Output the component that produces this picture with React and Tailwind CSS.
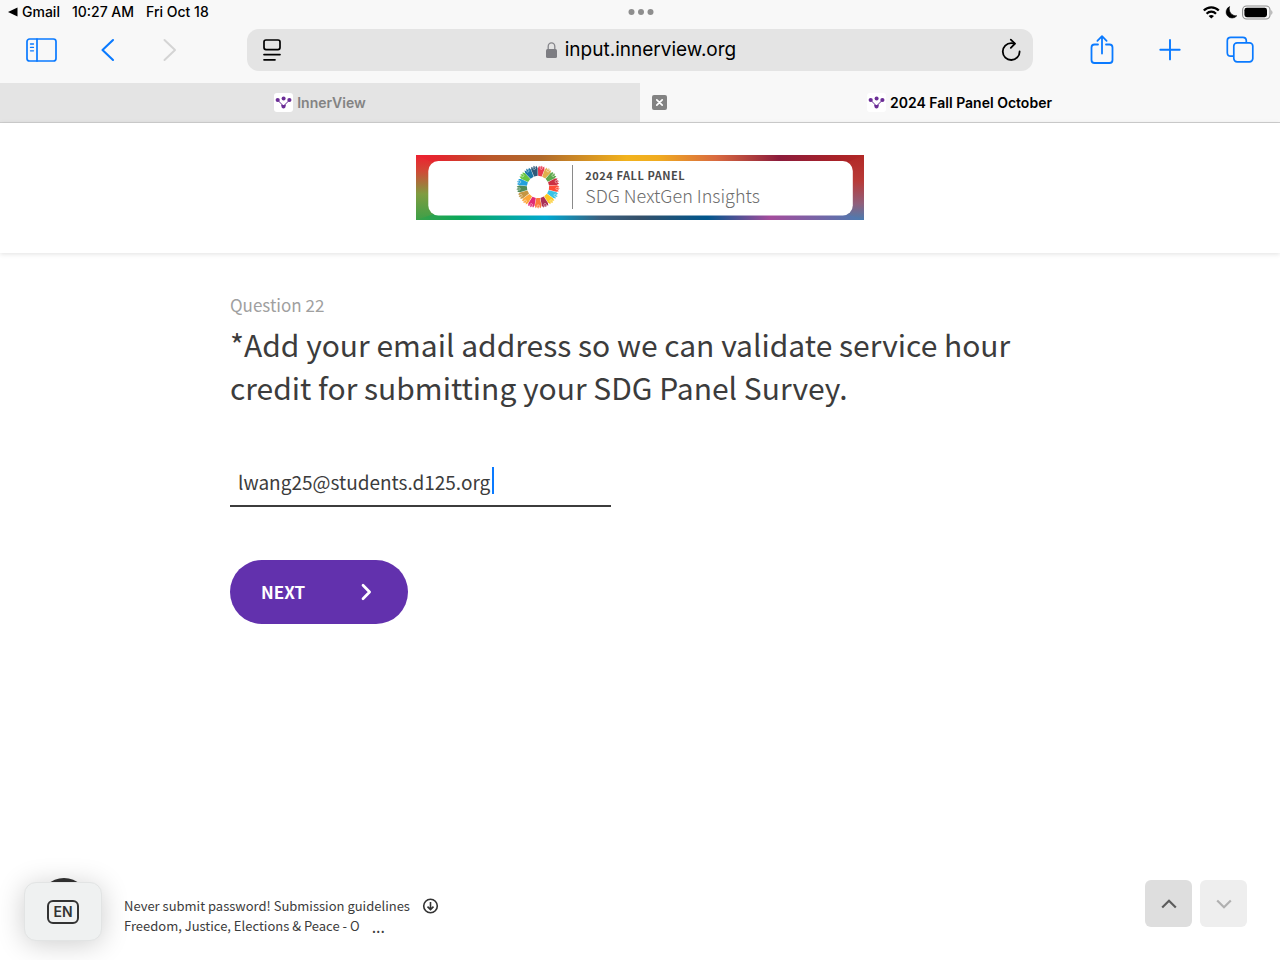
import { useState } from 'react';

const SDG_COLORS = [
  '#e5243b', '#dda63a', '#4c9f38', '#c5192d', '#ff3a21', '#26bde2', '#fcc30b', '#a21942', '#fd6925',
  '#dd1367', '#fd9d24', '#bf8b2e', '#3f7e44', '#0a97d9', '#56c02b', '#00689d', '#19486a',
];

const Favicon = () => (
  <svg width="19" height="19" viewBox="0 0 19 19" className="shrink-0" aria-hidden="true">
    <rect width="19" height="19" rx="3" fill="#fff" />
    <g fill="#6b2d96">
      <path d="M3.7 7.2 L9.5 13 L15.4 7.2" fill="none" stroke="#6b2d96" strokeWidth="1" />
      <circle cx="3.7" cy="7" r="2.1" />
      <circle cx="9.6" cy="5.4" r="2" />
      <circle cx="15.4" cy="7" r="2.1" />
      <path d="M7 11.5 Q9.5 12.6 12 11.5 L11.3 14.6 Q9.5 16.4 7.7 14.6 Z" />
    </g>
  </svg>
);

const StatusBar = () => (
  <div className="grid grid-cols-3 items-center h-6 pl-2 pr-1.5 text-sm font-medium text-black">
    <div className="flex items-center gap-3">
      <a href="#gmail" className="flex items-center gap-1">
        <svg width="10" height="10" viewBox="0 0 10 10" aria-hidden="true"><path d="M0 5 L9.5 0.6 V9.4 Z" /></svg>
        Gmail
      </a>
      <span>10:27 AM</span>
      <span>Fri Oct 18</span>
    </div>
    <svg width="26" height="6" viewBox="0 0 26 6" fill="#8e8e8e" className="justify-self-center" aria-hidden="true">
      <circle cx="3.5" cy="3" r="3" />
      <circle cx="13" cy="3" r="3" />
      <circle cx="22.5" cy="3" r="3" />
    </svg>
    <svg width="71" height="15" viewBox="0 0 71 15" className="justify-self-end" aria-hidden="true">
      <g fill="none" stroke="#000" strokeWidth="2.2">
        <path d="M0.8 5.6 A10.4 10.4 0 0 1 15.8 5.6" />
        <path d="M3.6 8.7 A6.5 6.5 0 0 1 13 8.7" />
      </g>
      <path d="M5.6 10.9 Q8.3 9 11 10.9 L8.3 13.5 Z" />
      <path d="M26.6 1.6 A6 6 0 1 0 33.8 10.8 A7 7 0 0 1 26.6 1.6 Z" strokeLinejoin="round" stroke="#000" strokeWidth="0.6" />
      <rect x="39.6" y="1" width="27.4" height="13" rx="4" fill="none" stroke="#8e8e8e" strokeWidth="1.1" />
      <rect x="41.4" y="2.8" width="22.6" height="9.4" rx="2.4" />
      <path d="M68.4 5 Q70.4 7.5 68.4 10 Z" fill="#9a9a9a" />
    </svg>
  </div>
);

const Toolbar = () => (
  <div className="flex items-center h-[52px] px-6 text-[#0a7aff]">
    <div className="flex flex-1 items-center gap-10">
      <button type="button" aria-label="Sidebar">
        <svg width="34" height="26" viewBox="0 0 34 26" fill="none" stroke="currentColor" strokeWidth="1.7" strokeLinecap="round" aria-hidden="true">
          <rect x="3" y="2" width="29" height="22" rx="2.6" />
          <path d="M13 2 V24" />
          <path d="M6.5 7 H9.5 M6.5 10.4 H9.5 M6.5 13.8 H9.5" strokeWidth="1.3" />
        </svg>
      </button>
      <button type="button" aria-label="Back">
        <svg width="22" height="24" viewBox="0 0 22 24" fill="none" stroke="currentColor" strokeWidth="2.1" strokeLinecap="round" strokeLinejoin="round" aria-hidden="true">
          <path d="M15 2 L4.5 12 L15 22" />
        </svg>
      </button>
      <button type="button" aria-label="Forward" disabled className="text-[#d4d4d4]">
        <svg width="22" height="24" viewBox="0 0 22 24" fill="none" stroke="currentColor" strokeWidth="2" strokeLinecap="round" strokeLinejoin="round" aria-hidden="true">
          <path d="M4.5 2 L15 12 L4.5 22" />
        </svg>
      </button>
    </div>
    <div className="flex items-center justify-between w-[786px] h-[42px] px-3 rounded-xl bg-[#e4e4e4] text-black">
      <button type="button" aria-label="Page settings">
        <svg width="24" height="26" viewBox="0 0 24 26" fill="none" stroke="currentColor" strokeWidth="1.7" strokeLinecap="round" aria-hidden="true">
          <rect x="5" y="3" width="16" height="9.6" rx="2" />
          <path d="M5 17.6 H21 M5 22.8 H16" />
        </svg>
      </button>
      <a href="#site" className="flex items-center gap-2 text-[19px] leading-6">
        <svg width="11" height="16" viewBox="0 0 11 16" aria-hidden="true">
          <path d="M2.2 8 V4.5 A3.3 3.6 0 0 1 8.8 4.5 V8" fill="none" stroke="#85858a" strokeWidth="1.3" />
          <rect y="7" width="11" height="9" rx="1.5" fill="#7d7d82" />
        </svg>
        input.innerview.org
      </a>
      <button type="button" aria-label="Reload">
        <svg width="22" height="26" viewBox="0 0 22 26" fill="none" stroke="currentColor" strokeWidth="1.8" strokeLinecap="round" strokeLinejoin="round" aria-hidden="true">
          <path d="M20.6 14.4 A8.4 8.4 0 1 1 12.2 6.2 Q14 6.2 15.6 6.6" />
          <path d="M11.8 2.6 L16 6.6 L11.8 10.8" />
        </svg>
      </button>
    </div>
    <div className="flex flex-1 items-center justify-end gap-10">
      <button type="button" aria-label="Share">
        <svg width="28" height="32" viewBox="0 0 28 32" fill="none" stroke="currentColor" strokeWidth="1.8" strokeLinecap="round" strokeLinejoin="round" aria-hidden="true">
          <path d="M10 10.5 H6.5 Q3.5 10.5 3.5 13.5 V26 Q3.5 29 6.5 29 H21.5 Q24.5 29 24.5 26 V13.5 Q24.5 10.5 21.5 10.5 H18" />
          <path d="M14 19.5 V2.6 M9.4 6.8 L14 2.2 L18.6 6.8" />
        </svg>
      </button>
      <button type="button" aria-label="New tab">
        <svg width="28" height="28" viewBox="0 0 28 28" fill="none" stroke="currentColor" strokeWidth="1.9" strokeLinecap="round" aria-hidden="true">
          <path d="M14 4 V23.4 M4.3 13.7 H23.7" />
        </svg>
      </button>
      <button type="button" aria-label="Tabs">
        <svg width="32" height="30" viewBox="0 0 32 30" fill="none" stroke="currentColor" strokeWidth="1.7" aria-hidden="true">
          <path d="M9.8 21.2 H6.8 Q3.3 21.2 3.3 17.7 V5.8 Q3.3 2.3 6.8 2.3 H18.8 Q22.3 2.3 22.3 5.8 V7.8" />
          <rect x="9.8" y="7.8" width="19" height="19" rx="3.3" />
        </svg>
      </button>
    </div>
  </div>
);

const TabBar = () => (
  <nav className="grid grid-cols-2 h-10 mt-[7px] border-b border-[#cfcfcf] text-sm font-semibold">
    <a href="#innerview" className="flex items-center justify-center gap-1 bg-[#e4e4e4] text-[#838383]">
      <Favicon />
      InnerView
    </a>
    <div className="flex items-center px-3 text-black">
      <button type="button" aria-label="Close tab">
        <svg width="15" height="15" viewBox="0 0 15 15" aria-hidden="true">
          <rect width="15" height="15" rx="2" fill="#838383" />
          <path d="M4.8 4.8 L10.2 10.2 M10.2 4.8 L4.8 10.2" stroke="#fff" strokeWidth="1.7" strokeLinecap="round" />
        </svg>
      </button>
      <a href="#survey" className="flex flex-1 items-center justify-center gap-1 pr-4">
        <Favicon />
        2024 Fall Panel October
      </a>
    </div>
  </nav>
);

const SdgWheel = () => (
  <svg width="44" height="44" viewBox="-22 -22 44 44" className="shrink-0" aria-hidden="true">
    {SDG_COLORS.map((color, i) => (
      <g key={color} transform={`rotate(${10 + (i * 360) / 17})`}>
        <path d="M-1.8 -11 L-3.3 -18.5 L-2.6 -21.2 L-1.6 -20 L0 -21.6 L1.6 -20 L2.6 -21.2 L3.3 -18.5 L1.8 -11 Z" fill={color} opacity="0.9" />
        <circle cy="-19.2" r="1.3" fill="none" stroke="#fff" strokeWidth="0.6" opacity="0.7" />
      </g>
    ))}
  </svg>
);

const Banner = () => (
  <div className="relative flex w-[448px] h-[65px]">
    <svg className="absolute inset-0" width="448" height="65" viewBox="0 0 448 65" aria-hidden="true">
      <defs>
        <linearGradient id="top">
          <stop offset="0" stopColor="#ee2030" />
          <stop offset="0.06" stopColor="#e02a2e" />
          <stop offset="0.16" stopColor="#bb562a" />
          <stop offset="0.28" stopColor="#b06a2c" />
          <stop offset="0.47" stopColor="#f2b31d" />
          <stop offset="0.54" stopColor="#f0ac20" />
          <stop offset="0.67" stopColor="#d96a40" />
          <stop offset="0.81" stopColor="#8c1c3c" />
          <stop offset="0.94" stopColor="#a92228" />
          <stop offset="1" stopColor="#b22826" />
        </linearGradient>
        <linearGradient id="bottom">
          <stop offset="0" stopColor="#3ca048" />
          <stop offset="0.1" stopColor="#0aa85a" />
          <stop offset="0.29" stopColor="#00a8d0" />
          <stop offset="0.41" stopColor="#3a6080" />
          <stop offset="0.5" stopColor="#34506a" />
          <stop offset="0.65" stopColor="#00568c" />
          <stop offset="0.79" stopColor="#a44c9c" />
          <stop offset="1" stopColor="#4a7cb0" />
        </linearGradient>
        <linearGradient id="left" x2="0" y2="1">
          <stop offset="0" stopColor="#ee2030" />
          <stop offset="0.25" stopColor="#d04a36" />
          <stop offset="0.6" stopColor="#7f9c40" />
          <stop offset="1" stopColor="#3ca048" />
        </linearGradient>
        <linearGradient id="right" x2="0" y2="1">
          <stop offset="0" stopColor="#b22826" />
          <stop offset="0.4" stopColor="#b83a38" />
          <stop offset="0.75" stopColor="#90607c" />
          <stop offset="1" stopColor="#4a7cb0" />
        </linearGradient>
      </defs>
      <rect width="448" height="33" fill="url(#top)" />
      <rect y="32" width="448" height="33" fill="url(#bottom)" />
      <path d="M0 0 L18 8 V59 L0 65 Z" fill="url(#left)" />
      <path d="M448 0 L430 8 V59 L448 65 Z" fill="url(#right)" />
      <rect x="12.3" y="6" width="424.5" height="54.5" rx="10" fill="#fff" />
    </svg>
    <div className="relative flex flex-1 items-center justify-center gap-3 pr-1">
      <SdgWheel />
      <div className="flex flex-col justify-center h-11 pl-3 border-l border-[#8a8a8a]">
        <span className="text-[11px] leading-4 font-bold tracking-wider text-[#4a4a4a]">2024 FALL PANEL</span>
        <span className="text-lg leading-6 font-light text-[#6c6c6c]">SDG NextGen Insights</span>
      </div>
    </div>
  </div>
);

const App = () => {
  const [email, setEmail] = useState('lwang25@students.d125.org');

  return (
    <div className="flex flex-col min-h-screen bg-white font-['Noto_Sans_CJK_SC',sans-serif] text-[#3c3c3c]">
      <div className="bg-[#f8f8f8] font-['Inter',sans-serif]">
        <StatusBar />
        <Toolbar />
        <TabBar />
      </div>

      <header className="flex items-center justify-center h-[130px] pb-0.5 shadow-[0_1px_5px_rgba(0,0,0,0.12)]">
        <Banner />
      </header>

      <main className="flex-1 w-full max-w-[820px] mx-auto pt-10">
        <p className="text-[17px] leading-6 text-[#a0a0a0]">Question 22</p>
        <h1 className="mt-1.5 text-[30px] leading-[43px]">
          *Add your email address so we can validate service hour credit for submitting your SDG Panel Survey.
        </h1>
        <form onSubmit={(e) => e.preventDefault()}>
          <div className="relative w-[381px] mt-12 border-b-2 border-[#3c3c3c]">
            <input
              type="email"
              aria-label="Email address"
              value={email}
              onChange={(e) => setEmail(e.target.value)}
              className="block w-full h-12 px-2 text-[19px] outline-none"
            />
            <span className="absolute left-[262px] top-[10px] w-[2px] h-[27px] bg-[#0a7aff]" />
          </div>
          <button type="submit" className="flex items-center justify-between w-[178px] h-16 mt-[53px] pl-[31px] pr-9 rounded-full bg-[#6231ad] text-[17px] font-bold text-white">
            NEXT
            <svg width="12" height="18" viewBox="0 0 12 18" fill="none" stroke="currentColor" strokeWidth="2.7" strokeLinecap="round" strokeLinejoin="round" aria-hidden="true">
              <path d="M3 2.2 L9.6 9 L3 15.8" />
            </svg>
          </button>
        </form>
      </main>

      <footer className="flex items-start justify-between pl-6 pr-[33px] pb-[19px]">
        <div className="flex items-start gap-[22px]">
          <div className="relative pt-1">
            <span className="absolute left-4 top-0 size-12 rounded-full bg-[#333333]" />
            <button type="button" className="relative flex items-center justify-center w-[78px] h-[59px] rounded-xl border border-[#e2e4e4] bg-[#eff1f1] shadow-[0_3px_28px_rgba(0,0,0,0.2)]">
              <span className="flex items-center justify-center w-8 h-6 rounded-md border-2 border-[#333333] font-['Inter',sans-serif] text-sm font-semibold text-[#333333]">EN</span>
            </button>
          </div>
          <div className="pt-[18px] text-[13px] leading-5">
            <div className="flex items-center gap-2.5">
              <a href="#guidelines">Never submit password! Submission guidelines</a>
              <button type="button" aria-label="Download">
                <svg width="20" height="16" viewBox="-2 0 20 16" fill="none" stroke="#333333" strokeWidth="1.6" aria-hidden="true">
                  <circle cx="8.5" cy="8" r="6.8" />
                  <path d="M8.5 4 V11.5 M5.5 8.6 L8.5 11.6 L11.5 8.6" />
                </svg>
              </button>
            </div>
            <div className="flex gap-3">
              <span>Freedom, Justice, Elections &amp; Peace - O</span>
              <button type="button" aria-label="More" className="text-base leading-5">...</button>
            </div>
          </div>
        </div>
        <div className="flex gap-2 pt-0.5">
          <button type="button" aria-label="Previous question" className="flex items-center justify-center size-[47px] rounded-md bg-[#dedede] text-[#5c5c5c]">
            <svg width="16" height="10" viewBox="0 0 16 10" fill="none" stroke="currentColor" strokeWidth="2.2" aria-hidden="true">
              <path d="M1.2 8.5 L8 1.8 L14.8 8.5" />
            </svg>
          </button>
          <button type="button" aria-label="Next question" disabled className="flex items-center justify-center size-[47px] rounded-md bg-[#eeeeee] text-[#b0b0b0]">
            <svg width="16" height="10" viewBox="0 0 16 10" fill="none" stroke="currentColor" strokeWidth="2.2" aria-hidden="true">
              <path d="M1.2 1.5 L8 8.2 L14.8 1.5" />
            </svg>
          </button>
        </div>
      </footer>
    </div>
  );
};

export default App;
